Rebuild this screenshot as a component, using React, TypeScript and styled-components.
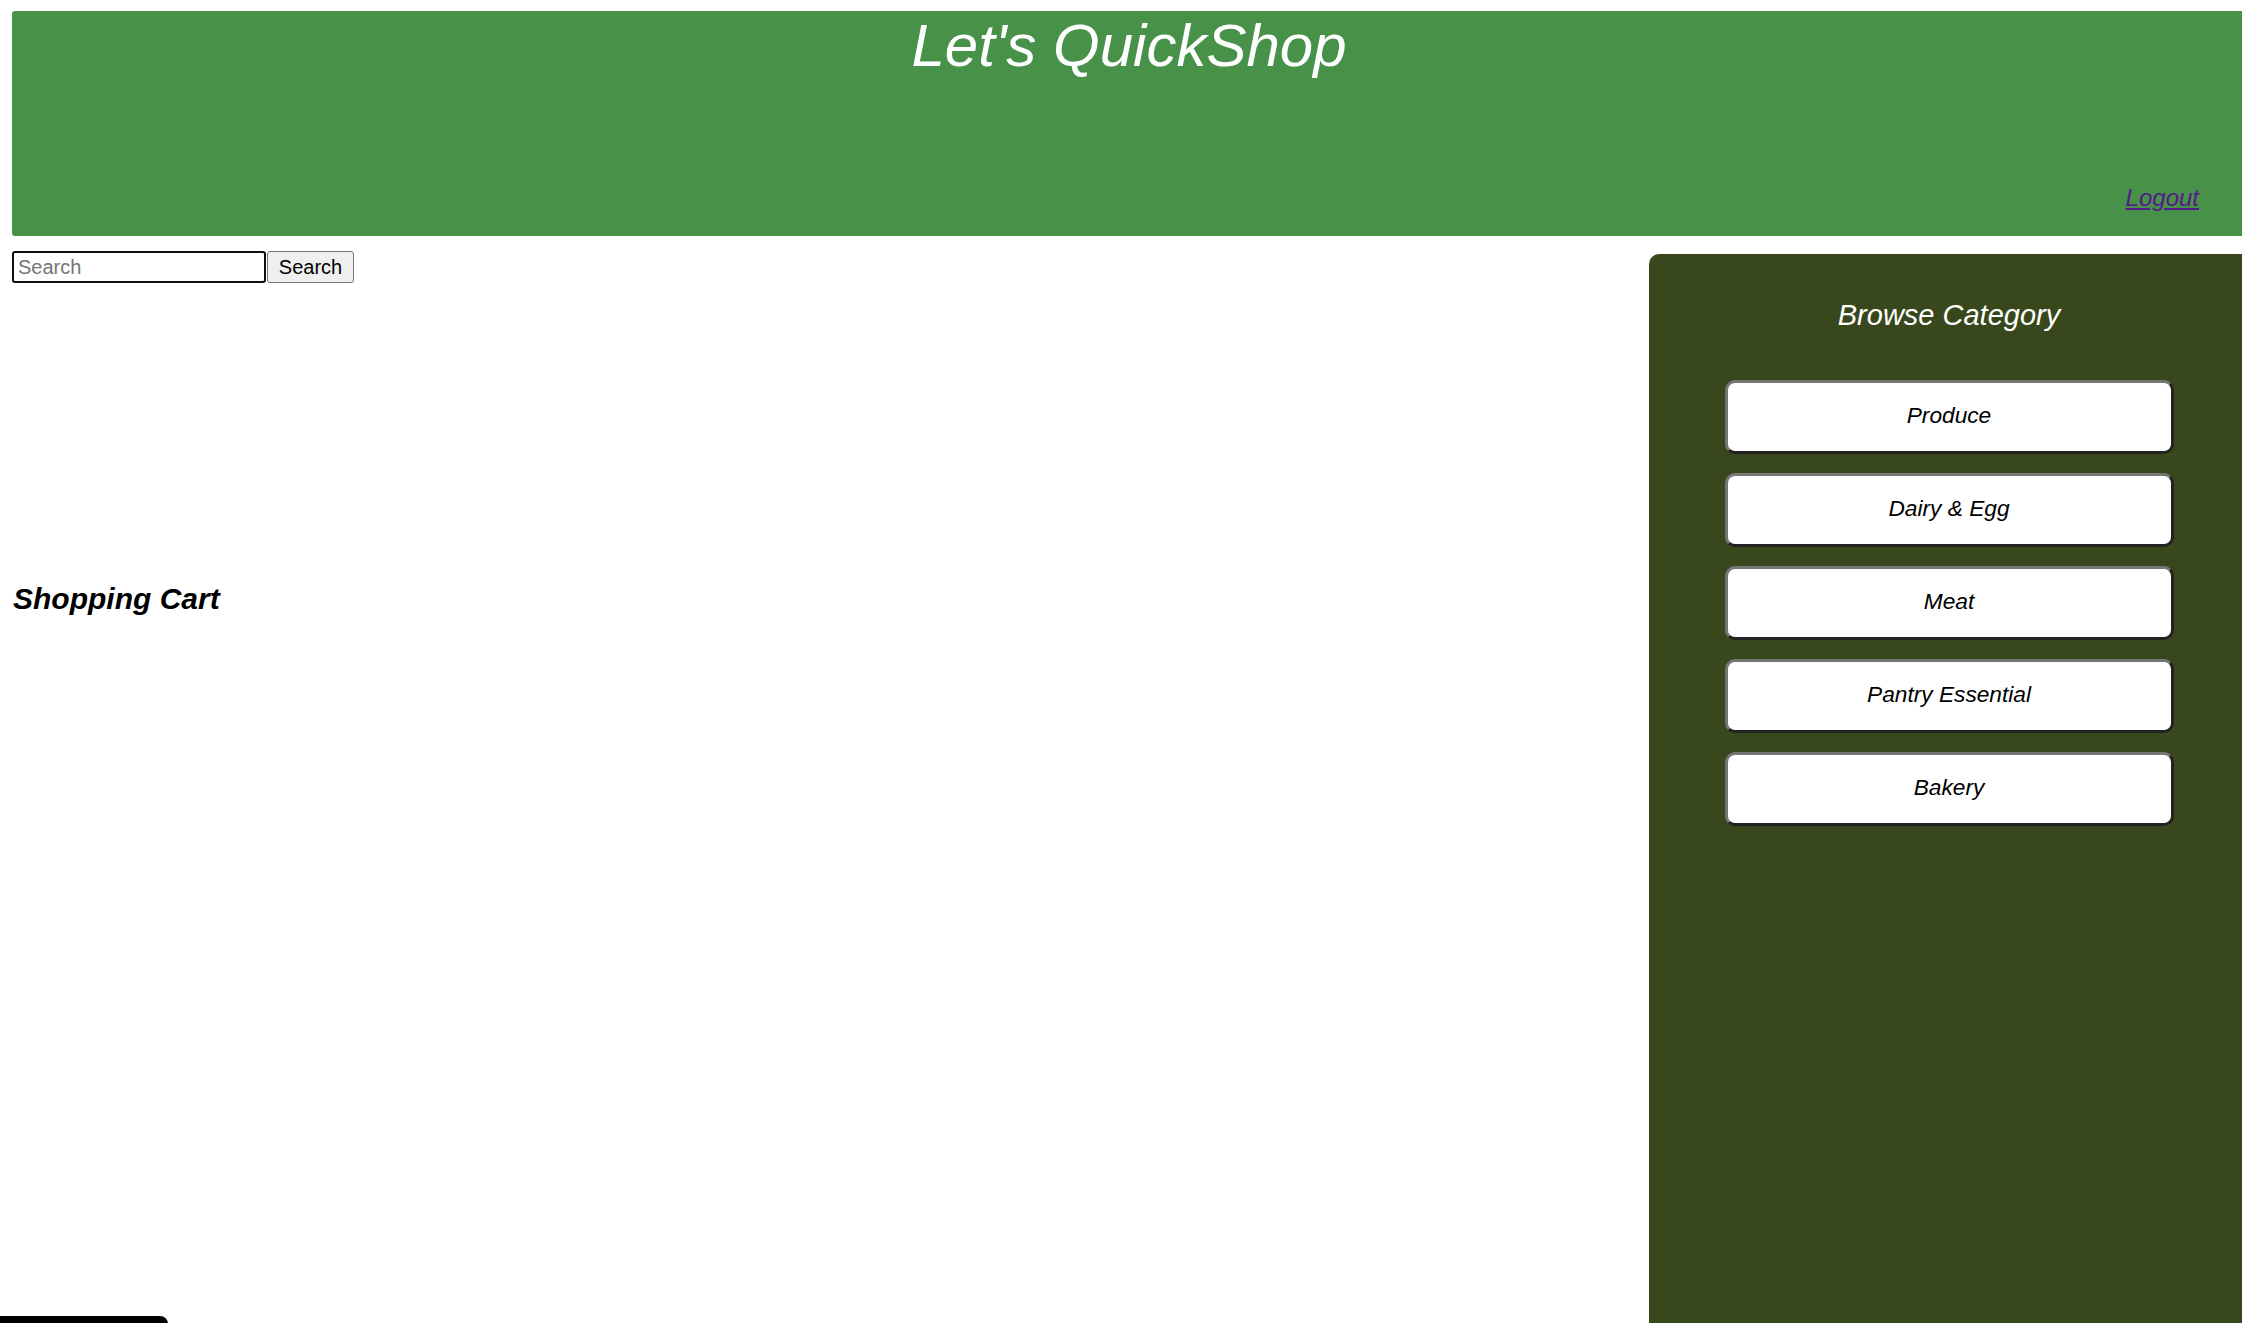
import React from 'react';
import styled, { createGlobalStyle } from 'styled-components';

const GlobalStyle = createGlobalStyle`
	html,
	body {
		margin: 0;
		padding: 0;
		overflow: hidden;
		background: #fff;
		font-family: 'Liberation Sans', Arial, sans-serif;
	}
`;

const Page = styled.div`
	position: relative;
	min-height: 1323px;
	padding: 11px 0 0 12px;
	box-sizing: border-box;
`;

const Header = styled.header`
	display: flex;
	flex-direction: column;
	height: 225px;
	padding: 0 43px 24px;
	box-sizing: border-box;
	border-radius: 3px 0 0 3px;
	background-color: #489148;
`;

const Title = styled.h1`
	margin: 0;
	padding-left: 4px;
	font-size: 60px;
	font-weight: normal;
	font-style: italic;
	text-align: center;
	color: #fff;
`;

const LogoutLink = styled.a`
	margin-top: auto;
	align-self: flex-end;
	font-size: 24px;
	font-style: italic;
	color: #551a8b;
	text-decoration: underline;
`;

const Content = styled.div`
	display: grid;
	grid-template-columns: 1637px 600px;
	align-items: start;
	margin-top: 15px;
`;

const Main = styled.main`
	display: flex;
	flex-direction: column;
`;

const SearchRow = styled.form`
	display: flex;
	gap: 1px;
	height: 32px;
`;

const SearchInput = styled.input`
	width: 254px;
	height: 32px;
	box-sizing: border-box;
	padding: 2px 4px;
	border: 2px solid #101010;
	border-radius: 3px;
	font-family: 'Liberation Sans', Arial, sans-serif;
	font-size: 20px;
	outline: none;

	&::placeholder {
		color: #757575;
	}
`;

const SearchButton = styled.button`
	width: 87px;
	height: 32px;
	box-sizing: border-box;
	padding: 0;
	border: 1px solid #767676;
	border-radius: 3px;
	background-color: #efefef;
	color: #000;
	font-family: 'Liberation Sans', Arial, sans-serif;
	font-size: 20px;
`;

const ProductArea = styled.section`
	min-height: 299px;
`;

const CartTitle = styled.h2`
	margin: 0;
	padding-left: 1px;
	font-size: 30px;
	font-weight: bold;
	font-style: italic;
	color: #000;
`;

const Sidebar = styled.aside`
	display: flex;
	flex-direction: column;
	align-items: center;
	min-height: 1080px;
	margin-top: 3px;
	padding-top: 45px;
	border-radius: 10px 0 0 0;
	background-color: #38471c;
`;

const SidebarTitle = styled.h2`
	margin: 0 0 48px;
	font-size: 29px;
	font-weight: normal;
	font-style: italic;
	color: #fff;
`;

const CategoryList = styled.div`
	display: flex;
	flex-direction: column;
	gap: 19px;
`;

const CategoryButton = styled.button`
	width: 449px;
	height: 74px;
	box-sizing: border-box;
	padding: 0 0 3px;
	border: 3px solid;
	border-color: #767676 #222 #222 #767676;
	border-radius: 10px;
	background-color: #fff;
	color: #000;
	font-family: 'Liberation Sans', Arial, sans-serif;
	font-size: 22.7px;
	font-style: italic;
`;

const BottomTab = styled.div`
	position: absolute;
	left: 0;
	top: 1316px;
	width: 168px;
	height: 30px;
	border-radius: 0 8px 0 0;
	background-color: #000;
`;

const categories = ['Produce', 'Dairy & Egg', 'Meat', 'Pantry Essential', 'Bakery'];

function App() {
	return (
		<Page>
			<GlobalStyle />
			<Header>
				<Title>Let's QuickShop</Title>
				<LogoutLink href='#'>Logout</LogoutLink>
			</Header>

			<Content>
				<Main>
					<SearchRow onSubmit={(e) => e.preventDefault()}>
						<SearchInput type='text' placeholder='Search' />
						<SearchButton type='submit'>Search</SearchButton>
					</SearchRow>
					<ProductArea />
					<CartTitle>Shopping Cart</CartTitle>
				</Main>

				<Sidebar>
					<SidebarTitle>Browse Category</SidebarTitle>
					<CategoryList>
						{categories.map((c) => (
							<CategoryButton key={c}>{c}</CategoryButton>
						))}
					</CategoryList>
				</Sidebar>
			</Content>

			<BottomTab />
		</Page>
	);
}

export default App;
